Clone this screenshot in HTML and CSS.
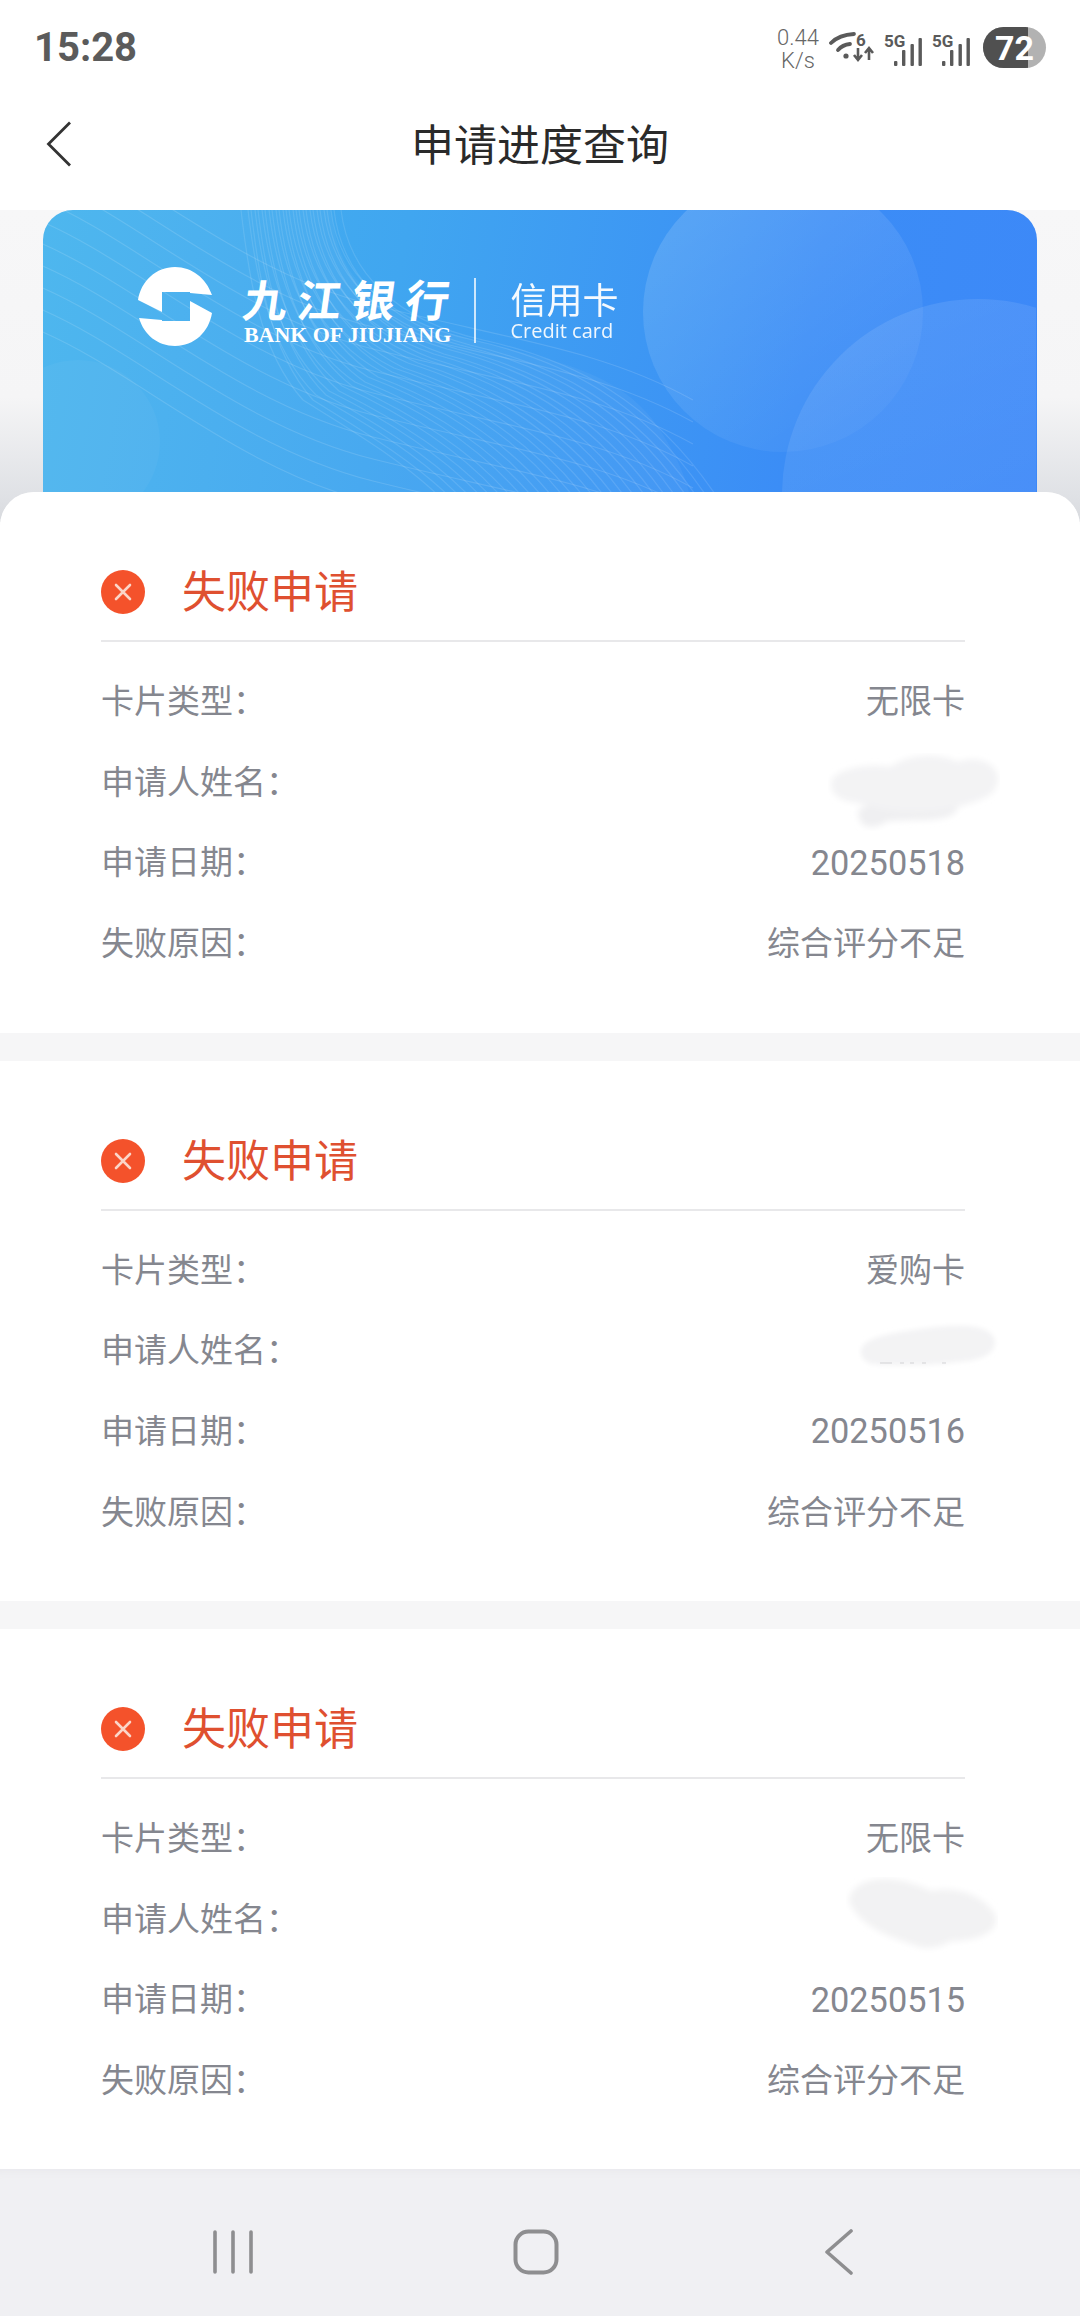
FILE: index.html
```html
<!DOCTYPE html>
<html lang="zh-CN">
<head>
<meta charset="utf-8">
<title>申请进度查询</title>
<link rel="stylesheet" href="styles.css">
</head>
<body>
<div class="phone">
  <header class="status">
    <div class="time">15:28</div>
    <div class="status-right">
      <div class="speed"><span>0.44</span><span>K/s</span></div>
      <svg class="ic-wifi" viewBox="0 0 46 34" width="46" height="34">
        <g fill="none" stroke="#5a5a5a" stroke-width="3.8" stroke-linecap="round">
          <path d="M2 12 C8 6 15 3.5 25 3"/>
          <path d="M9 19 C12 15.5 16 13.5 21 13"/>
        </g>
        <circle cx="17" cy="25" r="2.6" fill="#5a5a5a"/>
        <text x="27" y="15" class="svg-t6">6</text>
        <path d="M29 17 V27 M25 24 L29 29 L33 24 M40 29 V19 M36 22 L40 17 L44 22" fill="none" stroke="#5a5a5a" stroke-width="2.6"/>
      </svg>
      <svg class="ic-sig" viewBox="0 -6 38 38" width="38" height="38">
        <text x="0" y="12" class="svg-5g">5G</text>
        <g fill="#5a5a5a"><rect x="10" y="26" width="3.4" height="5" rx="1"/><rect x="18" y="15" width="3.4" height="16" rx="1"/><rect x="26.5" y="9" width="3.4" height="22" rx="1"/><rect x="34.5" y="3" width="3.4" height="28" rx="1"/></g>
      </svg>
      <svg class="ic-sig" viewBox="0 -6 38 38" width="38" height="38">
        <text x="0" y="12" class="svg-5g">5G</text>
        <g fill="#5a5a5a"><rect x="10" y="26" width="3.4" height="5" rx="1"/><rect x="18" y="15" width="3.4" height="16" rx="1"/><rect x="26.5" y="9" width="3.4" height="22" rx="1"/><rect x="34.5" y="3" width="3.4" height="28" rx="1"/></g>
      </svg>
      <div class="battery"><span class="battery-fill"></span><span class="battery-num">72</span></div>
    </div>
  </header>

  <nav class="titlebar">
    <svg class="back" viewBox="0 0 26 46" width="26" height="46"><path d="M24 1.5 L2.5 23 L24 44.5" fill="none" stroke="#333" stroke-width="2.8"/></svg>
    <h1 class="title">申请进度查询</h1>
  </nav>

  <section class="hero">
    <div class="bank-card">
      <svg class="card-art" viewBox="0 0 993 282" width="993" height="282">
        <defs>
          <linearGradient id="c1" x1="0" y1="0" x2="0.7" y2="1"><stop offset="0" stop-color="#fff" stop-opacity=".16"/><stop offset="1" stop-color="#fff" stop-opacity=".03"/></linearGradient>
          <linearGradient id="c2" x1="0.2" y1="0" x2="0.6" y2="1"><stop offset="0" stop-color="#fff" stop-opacity=".1"/><stop offset="1" stop-color="#fff" stop-opacity=".03"/></linearGradient>
          <path id="wave-a" d="M-10 30 C90 70 190 170 330 205 C470 240 560 250 650 300" fill="none" stroke="#fff" stroke-width="1.2" opacity=".13"/>
          <g id="fan" fill="none" stroke="#fff" stroke-width="1.2" opacity=".11">
            <path d="M198 0 C205 60 215 140 260 190 C300 215 360 250 400 290"/>
            <path d="M205 0 C212 60 225 138 273 185 C317 210 378 245 420 290"/>
            <path d="M212 0 C219 60 234 135 286 181 C334 205 397 241 441 290"/>
            <path d="M219 0 C226 60 244 133 299 176 C351 200 415 236 461 290"/>
            <path d="M226 0 C233 60 253 131 312 172 C368 195 434 232 482 290"/>
            <path d="M233 0 C240 60 263 128 325 167 C385 190 452 227 502 290"/>
            <path d="M240 0 C247 60 273 126 339 162 C402 185 471 222 523 290"/>
            <path d="M246 0 C253 60 282 124 351 158 C418 180 489 218 543 290"/>
            <path d="M253 0 C260 60 292 122 365 153 C435 175 508 213 564 290"/>
            <path d="M260 0 C267 60 302 119 378 148 C452 170 526 208 584 290"/>
            <path d="M267 0 C274 60 311 117 391 144 C469 165 545 204 605 290"/>
            <path d="M274 0 C281 60 321 115 404 139 C486 160 563 199 625 290"/>
            <path d="M281 0 C288 60 330 112 417 135 C503 155 582 195 646 290"/>
            <path d="M288 0 C295 60 340 110 430 130 C520 150 600 190 666 290"/>
          </g>
        </defs>
        <path d="M0 0 H288 C292 30 298 50 312 68 C350 110 400 122 450 135 C520 152 575 165 610 210 C630 238 640 260 646 282 H0 Z" fill="#fff" opacity=".045"/>
        <circle cx="740" cy="102" r="140" fill="url(#c1)"/>
        <circle cx="935" cy="285" r="196" fill="url(#c2)"/>
        <circle cx="35" cy="232" r="82" fill="#fff" opacity=".035"/>
        <use href="#wave-a"/><use href="#wave-a" y="-22"/><use href="#wave-a" y="-44"/><use href="#wave-a" y="-66"/><use href="#wave-a" y="-88"/><use href="#wave-a" y="-110"/><use href="#wave-a" y="22"/><use href="#wave-a" y="44"/><use href="#wave-a" y="66"/><use href="#wave-a" y="88"/>
        <use href="#fan"/><use href="#fan" x="10"/>
      </svg>
      <div class="brand">
        <svg class="brand-mark" viewBox="0 0 74 79" width="74" height="79">
          <path fill="#fff" d="M37 0 C54 0 68 11 74 28 L52 26 V25 H24 V45 L0 33 C3 14 18 0 37 0 Z"/>
          <path fill="#fff" d="M37 79 C20 79 6 68 1 51 L24 53 V54 H52 V34 L74 46 C71 65 56 79 37 79 Z"/>
        </svg>
        <div class="brand-name">
          <div class="brand-cn">九江银行</div>
          <div class="brand-en">BANK OF JIUJIANG</div>
        </div>
        <span class="brand-sep"></span>
        <div class="brand-sub">
          <div class="sub-cn">信用卡</div>
          <div class="sub-en">Credit card</div>
        </div>
      </div>
    </div>
  </section>

  <main class="sheet">
    <article class="record">
      <div class="record-head">
        <svg class="fail-ic" viewBox="0 0 44 44" width="44" height="44"><circle cx="22" cy="22" r="22" fill="#f4522b"/><path d="M15 15 L29 29 M29 15 L15 29" stroke="#fbd5c8" stroke-width="2.6" stroke-linecap="round"/></svg>
        <h2 class="record-title">失败申请</h2>
      </div>
      <div class="rows">
        <div class="row"><span>卡片类型：</span><span>无限卡</span></div>
        <div class="row"><span>申请人姓名：</span>
          <svg class="smudge smudge-1" viewBox="0 0 172 78" width="172" height="78"><defs><filter id="blur1"><feGaussianBlur stdDeviation="3"/></filter></defs><g filter="url(#blur1)"><path fill="#efeff1" d="M30 58 C40 48 90 45 130 55 C125 70 90 66 60 68 C45 78 30 76 30 58 Z"/><path fill="#f3f3f4" d="M3 30 C5 16 40 10 62 14 C80 1 110 -1 130 9 C150 1 172 12 170 28 C168 44 150 48 130 54 C100 64 50 58 30 50 C12 48 3 42 3 30 Z"/></g></svg>
        </div>
        <div class="row"><span>申请日期：</span><span class="num">20250518</span></div>
        <div class="row"><span>失败原因：</span><span>综合评分不足</span></div>
      </div>
    </article>

    <article class="record">
      <div class="record-head">
        <svg class="fail-ic" viewBox="0 0 44 44" width="44" height="44"><circle cx="22" cy="22" r="22" fill="#f4522b"/><path d="M15 15 L29 29 M29 15 L15 29" stroke="#fbd5c8" stroke-width="2.6" stroke-linecap="round"/></svg>
        <h2 class="record-title">失败申请</h2>
      </div>
      <div class="rows">
        <div class="row"><span>卡片类型：</span><span>爱购卡</span></div>
        <div class="row"><span>申请人姓名：</span>
          <svg class="smudge smudge-2" viewBox="0 0 142 48" width="142" height="48"><defs><filter id="blur2"><feGaussianBlur stdDeviation="2.5"/></filter></defs><path filter="url(#blur2)" fill="#f3f3f4" d="M3 28 C6 14 40 10 70 6 C100 2 130 2 136 16 C140 28 130 38 100 40 C70 44 30 44 14 42 C6 40 2 34 3 28 Z"/><path d="M22 41 H34 M42 41 H46 M52 41 H56 M64 41 H68 M84 41 H88" stroke="#c9c9cc" stroke-width="1" opacity=".8"/></svg>
        </div>
        <div class="row"><span>申请日期：</span><span class="num">20250516</span></div>
        <div class="row"><span>失败原因：</span><span>综合评分不足</span></div>
      </div>
    </article>

    <article class="record">
      <div class="record-head">
        <svg class="fail-ic" viewBox="0 0 44 44" width="44" height="44"><circle cx="22" cy="22" r="22" fill="#f4522b"/><path d="M15 15 L29 29 M29 15 L15 29" stroke="#fbd5c8" stroke-width="2.6" stroke-linecap="round"/></svg>
        <h2 class="record-title">失败申请</h2>
      </div>
      <div class="rows">
        <div class="row"><span>卡片类型：</span><span>无限卡</span></div>
        <div class="row"><span>申请人姓名：</span>
          <svg class="smudge smudge-3" viewBox="0 0 152 76" width="152" height="76"><defs><filter id="blur3"><feGaussianBlur stdDeviation="3"/></filter></defs><path filter="url(#blur3)" fill="#f2f2f3" d="M3 24 C4 8 24 1 42 2 C60 3 76 10 86 14 C110 8 142 20 150 40 C152 56 130 64 105 64 C95 70 80 74 68 68 C45 60 13 50 3 24 Z"/></svg>
        </div>
        <div class="row"><span>申请日期：</span><span class="num">20250515</span></div>
        <div class="row"><span>失败原因：</span><span>综合评分不足</span></div>
      </div>
    </article>
  </main>

  <footer class="navbar">
    <svg class="nav-ic" viewBox="0 0 42 46" width="42" height="46"><path d="M3 3 V43 M21 3 V43 M39 3 V43" stroke="#8e8e90" stroke-width="3.6" stroke-linecap="round"/></svg>
    <svg class="nav-ic" viewBox="0 0 46 46" width="46" height="46"><rect x="2.5" y="2.5" width="41" height="41" rx="13" fill="none" stroke="#8e8e90" stroke-width="4"/></svg>
    <svg class="nav-ic" viewBox="0 0 30 46" width="30" height="46"><path d="M27 2 L3 23 L27 44" fill="none" stroke="#8e8e90" stroke-width="3.6" stroke-linecap="round" stroke-linejoin="round"/></svg>
  </footer>
</div>
</body>
</html>
```

FILE: styles.css
```css
* { box-sizing: border-box; }
html, body { margin: 0; padding: 0; }
body {
  width: 1080px;
  height: 2316px;
  overflow: hidden;
  font-family: "Noto Sans CJK SC", "Noto Sans", sans-serif;
  background: #fff;
}
.phone {
  width: 1080px;
  height: 2316px;
  display: flex;
  flex-direction: column;
  background: #fff;
}

/* status bar */
.status {
  height: 95px;
  padding: 0 34px;
  display: flex;
  align-items: center;
  justify-content: space-between;
}
.time {
  font-family: Roboto, sans-serif;
  font-weight: 700;
  font-size: 40px;
  color: #5b5b5b;
}
.status-right { display: flex; align-items: center; }
.speed {
  width: 46px;
  margin-top: 3px;
  display: flex;
  flex-direction: column;
  align-items: center;
  font-family: Roboto, sans-serif;
  font-weight: 300;
  font-size: 22px;
  line-height: 23px;
  color: #666;
}
.ic-wifi { margin-left: 8px; }
.ic-sig { margin-left: 9px; }
.ic-sig + .ic-sig { margin-left: 10px; }
.svg-t6 { font: 700 17px Roboto, sans-serif; fill: #5a5a5a; }
.svg-5g { font: 700 17px Roboto, sans-serif; fill: #5a5a5a; }
.battery {
  position: relative;
  width: 63px;
  height: 41px;
  margin-left: 13px;
  border-radius: 21px;
  overflow: hidden;
  background: #b2b2b2;
  display: flex;
  align-items: center;
  justify-content: center;
}
.battery-fill { position: absolute; left: 0; top: 0; bottom: 0; width: 45px; background: #505050; }
.battery-num {
  position: relative;
  font-family: Roboto, sans-serif;
  font-weight: 700;
  font-size: 34px;
  color: #fff;
}

/* title bar */
.titlebar {
  position: relative;
  height: 115px;
  display: flex;
  align-items: center;
  justify-content: center;
}
.back { position: absolute; left: 46px; top: 26px; }
.title { margin: -21px 0 0; font-size: 43px; font-weight: 400; color: #2a2a2a; }

/* hero */
.hero {
  height: 312px;
  margin-bottom: -30px;
  padding: 0 43px;
  background: linear-gradient(#f7f7f8 0%, #f5f5f6 60%, #dfe1e5 92%, #d8dade 100%);
}
.bank-card {
  position: relative;
  height: 312px;
  border-radius: 30px 30px 0 0;
  overflow: hidden;
  background: linear-gradient(100deg, #47b4ee 0%, #40a6f0 35%, #3b8df6 75%, #3d88f8 100%);
}
.card-art { position: absolute; left: 0; top: 0; }
.brand {
  position: relative;
  display: flex;
  align-items: flex-start;
  padding: 57px 0 0 95px;
  color: #fff;
}
.brand-name { margin-left: 32px; width: 208px; margin-top: 9px; }
.brand-cn {
  font-weight: 700;
  font-size: 44px;
  line-height: 44px;
  letter-spacing: 10px;
  white-space: nowrap;
  transform: skewX(-8deg);
  transform-origin: left;
}
.brand-en {
  font-family: "Liberation Serif", serif;
  font-weight: 700;
  font-size: 21.9px;
  line-height: 22px;
  margin-top: 4px;
  white-space: nowrap;
}
.brand-sep { width: 1.5px; height: 65px; background: rgba(255,255,255,.75); margin: 11px 0 0 22px; }
.brand-sub { margin-left: 35px; margin-top: 11px; }
.sub-cn { font-size: 36px; line-height: 40px; white-space: nowrap; font-weight: 400; opacity: .95; }
.sub-en { font-family: "Open Sans", sans-serif; font-size: 20px; line-height: 22px; margin-top: 2px; white-space: nowrap; opacity: .92; }

/* records sheet */
.sheet {
  flex: 1;
  position: relative;
  display: flex;
  flex-direction: column;
  gap: 28px;
  background: #f6f6f7;
  border-radius: 34px 34px 0 0;
  overflow: hidden;
}
.record {
  height: 540.5px;
  flex: none;
  padding: 0 115px 0 101px;
  background: #fff;
  color: #85878f;
}
.record-head {
  height: 150px;
  padding: 56px 0 0 0;
  display: flex;
  align-items: flex-start;
  border-bottom: 2px solid #e8e8ea;
}
.fail-ic { margin-top: 22px; flex: none; }
.record-title {
  margin: 12px 0 0 37px;
  font-size: 44px;
  line-height: 58px;
  font-weight: 400;
  color: #df5030;
}
.rows { padding-top: 17px; }
.row {
  position: relative;
  height: 80.6px;
  display: flex;
  align-items: center;
  justify-content: space-between;
  font-size: 33px;
}
.num { font-family: Roboto, sans-serif; font-size: 34.3px; margin-top: 5px; }
.smudge { position: absolute; }
.smudge-1 { left: 727px; top: 13px; }
.smudge-2 { left: 757px; top: 14px; }
.smudge-3 { left: 745px; top: 0; }

/* nav bar */
.navbar {
  height: 147px;
  background: #f0f0f3;
  display: flex;
  align-items: flex-start;
  position: relative;
  padding: 60px 0 0 212px;
  box-shadow: inset 0 10px 8px -8px #e8e8ec;
}
.nav-ic { flex: none; }
.nav-ic:nth-child(2) { margin-left: 259px; }
.nav-ic:nth-child(3) { margin-left: 265px; }
```
